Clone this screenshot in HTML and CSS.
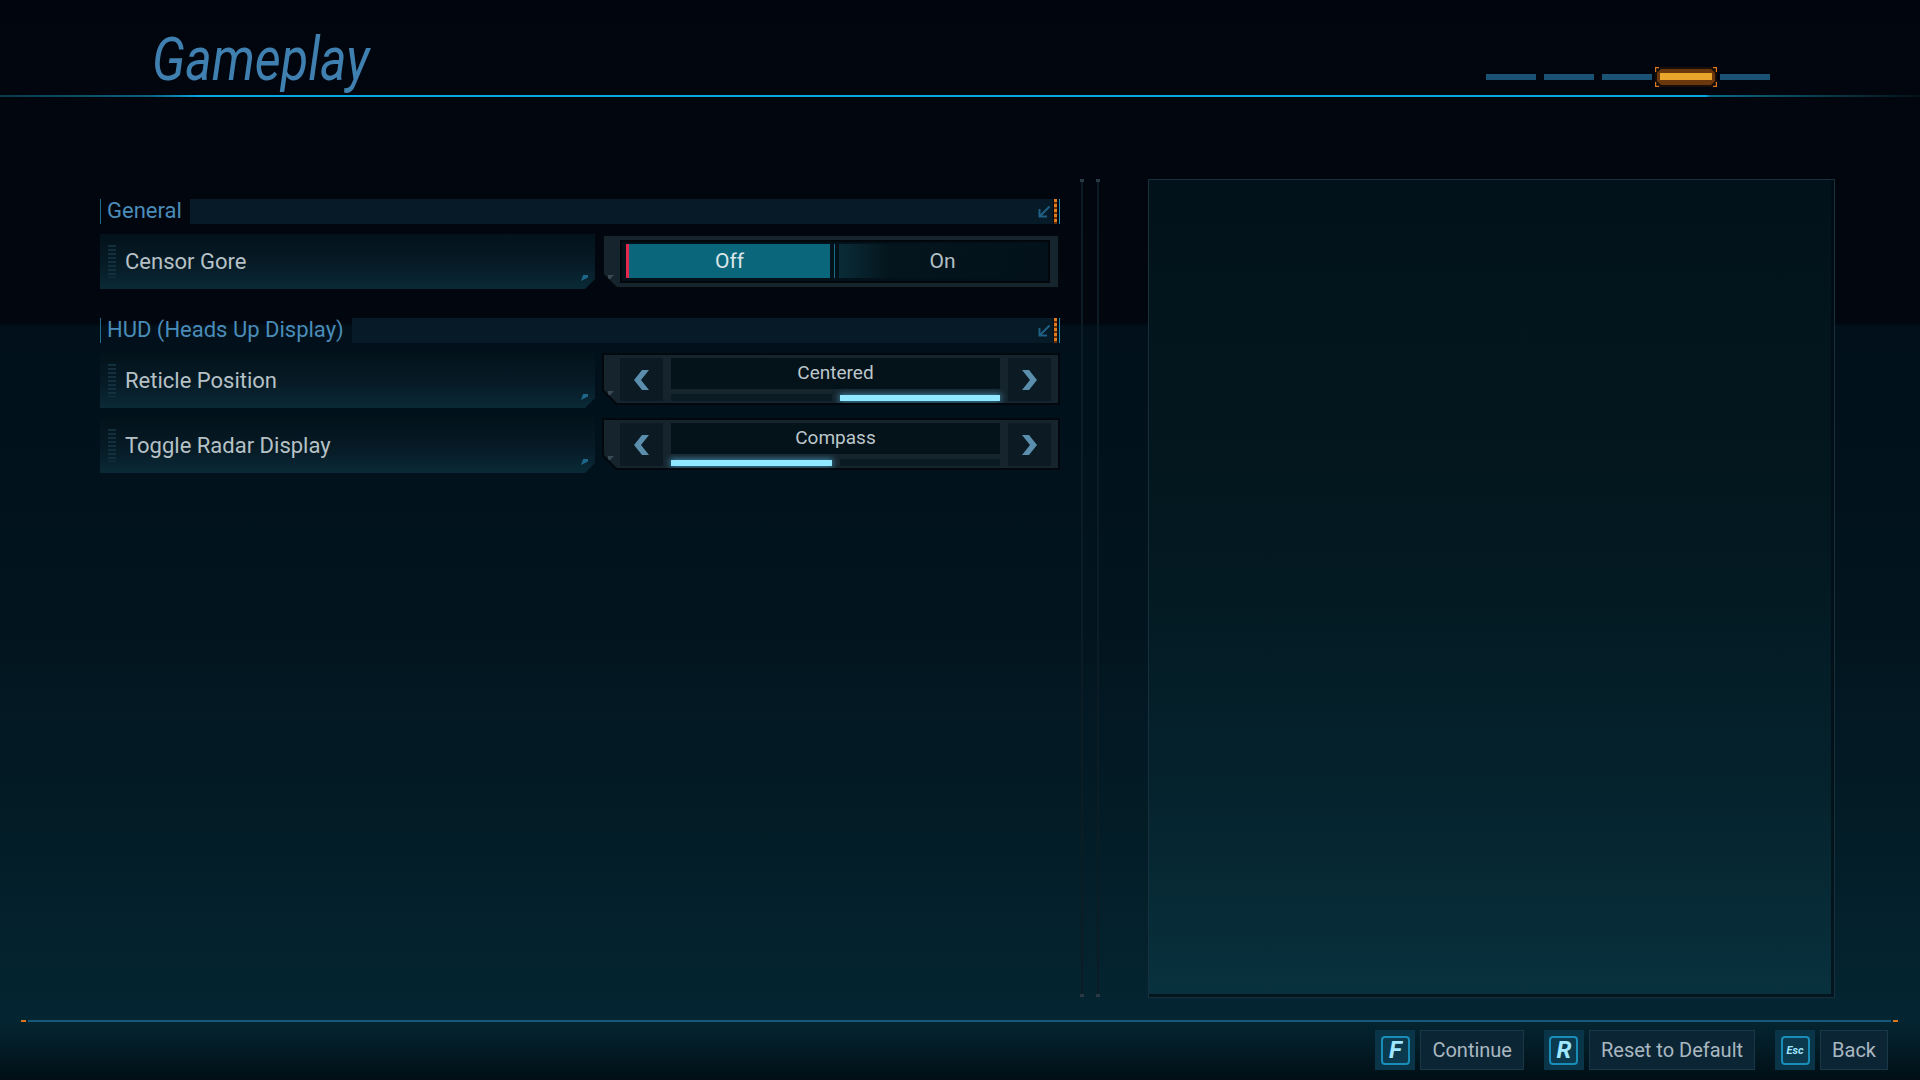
FILE: index.html
```html
<!DOCTYPE html>
<html lang="en">
<head>
  <meta charset="UTF-8">
  <meta name="viewport" content="width=device-width, initial-scale=1.0">
  <title>Gameplay</title>
  <link rel="stylesheet" href="styles.css">
</head>
<body>
<div class="screen">
  <header class="topbar">
    <h1 class="title">Gameplay</h1>
    <div class="pager">
      <span class="dash"></span>
      <span class="dash"></span>
      <span class="dash"></span>
      <svg class="pill" width="62" height="20" viewBox="0 0 62 20">
        <polygon points="5,0 57,0 62,5 62,15 57,20 5,20 0,15 0,5" fill="#1a0f07"/>
        <polygon points="6,2 56,2 60,6 60,14 56,18 6,18 2,14 2,6" fill="#6b380e"/>
        <rect x="5" y="6" width="52" height="7" fill="#eaa62a"/>
        <path d="M0.5,5 V0.5 H4 M58,0.5 H61.5 V5 M61.5,15 V19.5 H58 M4,19.5 H0.5 V15" stroke="#e2791c" stroke-width="1.4" fill="none"/>
      </svg>
      <span class="dash"></span>
    </div>
  </header>
  <div class="topline"></div>

  <main class="content">
    <section class="settings">
      <div class="group">
        <div class="group-head">
          <span class="group-name">General</span>
          <span class="group-bar">
            <svg width="14" height="14" viewBox="0 0 14 14"><path d="M12.5,1.5 L3,11 M2.5,4 V11.5 H10" stroke="#1f5f82" stroke-width="2" fill="none"/></svg>
          </span>
          <span class="group-tick"></span>
          <span class="group-edge"></span>
        </div>
        <div class="row">
          <div class="row-label"><span class="grip"></span>Censor Gore</div>
          <div class="control">
            <div class="frame toggle">
              <div class="toggle-box">
                <span class="opt opt-on">Off</span>
                <span class="opt-split"></span>
                <span class="opt opt-off">On</span>
              </div>
            </div>
          </div>
        </div>
      </div>

      <div class="group">
        <div class="group-head">
          <span class="group-name">HUD (Heads Up Display)</span>
          <span class="group-bar">
            <svg width="14" height="14" viewBox="0 0 14 14"><path d="M12.5,1.5 L3,11 M2.5,4 V11.5 H10" stroke="#1f5f82" stroke-width="2" fill="none"/></svg>
          </span>
          <span class="group-tick"></span>
          <span class="group-edge"></span>
        </div>
        <div class="row">
          <div class="row-label"><span class="grip"></span>Reticle Position</div>
          <div class="control">
            <div class="frame select">
              <span class="arrow"><svg width="15" height="20" viewBox="0 0 15 20"><polygon points="8,0 15,0 7,10 15,20 8,20 0,10" fill="#5b8dac"/></svg></span>
              <div class="value-col">
                <div class="value">Centered</div>
                <div class="track"><span class="seg"></span><span class="seg active"></span></div>
              </div>
              <span class="arrow"><svg width="15" height="20" viewBox="0 0 15 20"><polygon points="7,0 0,0 8,10 0,20 7,20 15,10" fill="#5b8dac"/></svg></span>
            </div>
          </div>
        </div>
        <div class="row">
          <div class="row-label"><span class="grip"></span>Toggle Radar Display</div>
          <div class="control">
            <div class="frame select">
              <span class="arrow"><svg width="15" height="20" viewBox="0 0 15 20"><polygon points="8,0 15,0 7,10 15,20 8,20 0,10" fill="#5b8dac"/></svg></span>
              <div class="value-col">
                <div class="value">Compass</div>
                <div class="track"><span class="seg active"></span><span class="seg"></span></div>
              </div>
              <span class="arrow"><svg width="15" height="20" viewBox="0 0 15 20"><polygon points="7,0 0,0 8,10 0,20 7,20 15,10" fill="#5b8dac"/></svg></span>
            </div>
          </div>
        </div>
      </div>
    </section>

    <div class="rails">
      <span class="rail"></span>
      <span class="rail"></span>
    </div>

    <aside class="preview"></aside>
  </main>

  <footer class="footer">
    <div class="footline">
      <span class="foot-tick"></span>
      <span class="foot-bar"></span>
      <span class="foot-tick"></span>
    </div>
    <div class="actions">
      <div class="action">
        <span class="key"><span class="key-cap">F</span></span>
        <span class="action-name">Continue</span>
      </div>
      <div class="action">
        <span class="key"><span class="key-cap">R</span></span>
        <span class="action-name">Reset to Default</span>
      </div>
      <div class="action">
        <span class="key"><span class="key-cap key-small">Esc</span></span>
        <span class="action-name">Back</span>
      </div>
    </div>
  </footer>
</div>
</body>
</html>
```

FILE: styles.css
```css
* {
  box-sizing: border-box;
}

body {
  margin: 0;
  font-family: Roboto, "Noto Sans", sans-serif;
  background: #02060f;
  overflow: hidden;
}

.screen {
  width: 1920px;
  height: 1080px;
  display: flex;
  flex-direction: column;
  background: linear-gradient(180deg,
    #01050e 0,
    #02060f 323px,
    #01101a 326px,
    #02141e 600px,
    #031c26 820px,
    #042532 1020px,
    #031b24 1050px,
    #010e15 1080px);
}

/* header */

.topbar {
  height: 95px;
  display: flex;
  justify-content: space-between;
  align-items: flex-start;
  padding: 30px 150px 0 152px;
}

.title {
  margin: 0;
  font-size: 60px;
  line-height: 60px;
  font-weight: 400;
  font-style: italic;
  color: #3f80b0;
  transform: scaleX(0.84);
  transform-origin: left center;
}

.pager {
  display: flex;
  align-items: center;
  gap: 8px;
  margin-top: 37px;
}

.dash {
  width: 50px;
  height: 6px;
  background: #1a5273;
}

.pill {
  margin: 0 -5px 0 -5px;
}

.topline {
  height: 2px;
  background: linear-gradient(90deg,
    #0a3a4a 0,
    #0c6280 150px,
    #0aa5e4 200px,
    #0aa5e4 1706px,
    #0c6a86 1710px,
    #0a4a5e 1790px,
    #06222c 1880px,
    #03121a 1920px);
}

/* content */

.content {
  height: 923px;
  display: flex;
  align-items: flex-start;
  padding: 82px 0 0 100px;
}

.settings {
  width: 960px;
  padding-top: 20px;
}

.group + .group {
  margin-top: 30px;
}

.group-head {
  height: 25px;
  display: flex;
  border-left: 1px solid #1e6e8c;
}

.group-name {
  padding: 0 8px 0 6px;
  font-size: 22px;
  line-height: 24px;
  color: #4a8cb8;
}

.group-bar {
  flex: 1;
  display: flex;
  align-items: center;
  justify-content: flex-end;
  padding-right: 2px;
  background: #061a27;
}

.group-tick {
  width: 3px;
  margin-left: 1px;
  background: repeating-linear-gradient(180deg, #e07a1c 0 3px, #6a3208 3px 5px);
}

.group-edge {
  width: 1px;
  margin-left: 2px;
  background: #1f8ab2;
}

.row {
  height: 54px;
  margin-top: 10px;
  display: flex;
  align-items: flex-start;
  gap: 7px;
}

.row + .row {
  margin-top: 11px;
}

.row-label {
  position: relative;
  width: 495px;
  height: 55px;
  display: flex;
  align-items: center;
  padding-left: 8px;
  font-size: 22px;
  color: #b6c1c6;
  background: linear-gradient(180deg, #03121b 0%, #061b26 55%, #0a2a37 100%);
  clip-path: polygon(0 0, 100% 0, 100% calc(100% - 10px), calc(100% - 10px) 100%, 0 100%);
}

.row-label::after {
  content: "";
  position: absolute;
  right: 7px;
  bottom: 8px;
  width: 7px;
  height: 6px;
  background: #1f6789;
  clip-path: polygon(0 0, 100% 0, 100% 100%, 0 100%, 0 100%);
  clip-path: polygon(30% 0, 100% 0, 100% 40%, 0 100%);
}

.grip {
  width: 8px;
  height: 33px;
  margin-right: 9px;
  background: repeating-linear-gradient(180deg, #12303e 0 2px, transparent 2px 4px);
}

.control {
  width: 458px;
  padding: 2px;
  background: #02080d;
  clip-path: polygon(0 0, 100% 0, 100% 100%, 14px 100%, 0 calc(100% - 14px));
}

.frame {
  position: relative;
  background: #16242d;
  clip-path: polygon(0 0, 100% 0, 100% 100%, 13px 100%, 0 calc(100% - 13px));
}

.frame::after {
  content: "";
  position: absolute;
  left: 4px;
  bottom: 6px;
  width: 6px;
  height: 6px;
  background: #3b4b56;
  clip-path: polygon(0 0, 100% 0, 0 100%);
}

/* toggle */

.toggle {
  padding: 4px 8px 4px 16px;
}

.toggle-box {
  height: 43px;
  display: flex;
  padding: 2px 2px 3px 4px;
  border: 2px solid #01070b;
  background: #03121a;
}

.opt {
  display: flex;
  align-items: center;
  justify-content: center;
  font-size: 21px;
}

.opt-on {
  width: 204px;
  border-left: 3px solid #e2284c;
  background: #0a677b;
  color: #dbe6e9;
}

.opt-split {
  width: 1px;
  margin: 0 4px;
  background: #1b6c86;
}

.opt-off {
  flex: 1;
  background: linear-gradient(90deg, #0a2c37 0, #04151d 50px, #03121a 100%);
  color: #b4c0c5;
}

/* select */

.select {
  display: flex;
  gap: 8px;
  padding: 3px 7px 2px 16px;
}

.arrow {
  width: 43px;
  height: 43px;
  display: flex;
  align-items: center;
  justify-content: center;
  background: #0b1a23;
}

.value-col {
  width: 329px;
}

.value {
  height: 31px;
  line-height: 29px;
  text-align: center;
  font-size: 19px;
  color: #bcc7cc;
  background: #04121a;
}

.track {
  height: 7px;
  margin-top: 5px;
  display: flex;
  gap: 8px;
}

.seg {
  flex: 1;
  background: #0a1b24;
}

.seg.active {
  margin: 1px 0 0 0;
  height: 6px;
  background: #8fe8ff;
  box-shadow: 0 0 6px 1px rgba(90, 210, 255, 0.55);
}

/* separator rails */

.rails {
  display: flex;
  gap: 14px;
  height: 818px;
  margin-left: 21px;
}

.rail {
  position: relative;
  width: 2px;
  background: #0c1c25;
}

.rail::before,
.rail::after {
  content: "";
  position: absolute;
  left: -1px;
  width: 4px;
  height: 3px;
  background: #2a3a44;
}

.rail::before {
  top: 0;
}

.rail::after {
  bottom: 0;
}

.preview {
  width: 687px;
  height: 819px;
  margin-left: 49px;
  border: 1px solid #17303b;
  background: linear-gradient(180deg, #02121a 0, #031820 45%, #05232d 75%, #08313e 100%);
  box-shadow: inset -3px -3px 0 rgba(1, 12, 18, 0.7);
}

/* footer */

.footer {
  flex: 1;
}

.footline {
  height: 2px;
  display: flex;
  gap: 2px;
  padding: 0 22px 0 21px;
}

.foot-tick {
  width: 5px;
  background: #de7518;
}

.foot-bar {
  flex: 1;
  background: #17587a;
}

.actions {
  display: flex;
  justify-content: flex-end;
  gap: 20px;
  margin-top: 8px;
  padding-right: 32px;
}

.action {
  display: flex;
  gap: 5px;
}

.key {
  width: 40px;
  height: 40px;
  display: flex;
  align-items: center;
  justify-content: center;
  background: #0a3447;
}

.key-cap {
  width: 29px;
  height: 29px;
  display: flex;
  align-items: center;
  justify-content: center;
  border: 2px solid #1a8cb8;
  border-radius: 4px;
  background: #0b3a4e;
  font-size: 24px;
  font-weight: 700;
  font-style: italic;
  color: #9fe6ff;
}

.key-small {
  font-size: 11px;
}

.action-name {
  height: 40px;
  padding: 0 11px;
  border: 1px solid #183849;
  background: #0c2535;
  font-size: 20px;
  line-height: 38px;
  color: #a9b8c0;
}
```
